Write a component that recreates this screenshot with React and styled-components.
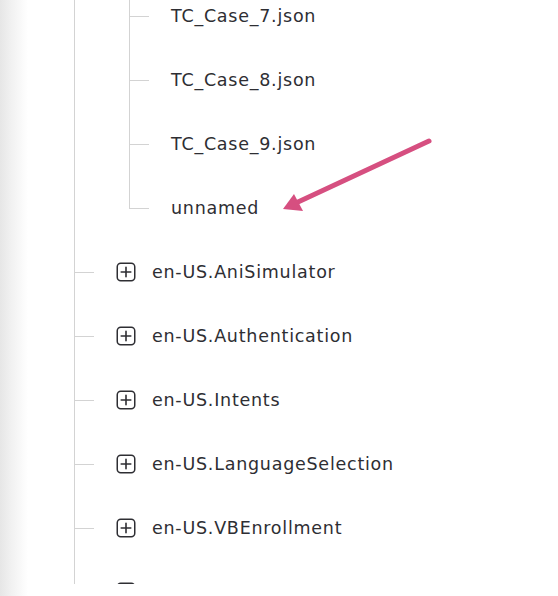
import React from "react";
import styled, { createGlobalStyle } from "styled-components";

const GlobalStyle = createGlobalStyle`
  html, body {
    margin: 0;
    padding: 0;
    background: #ffffff;
    overflow: hidden;
  }
`;

const Page = styled.div`
  position: relative;
  display: flex;
  width: 558px;
  height: 596px;
  overflow: hidden;
  background: #ffffff;
  font-family: "DejaVu Sans", "Liberation Sans", sans-serif;
  color: #2e2e33;
`;

const Shade = styled.div`
  flex: 0 0 28px;
  background: linear-gradient(to right, #e6e6e6 0%, #f1f1f1 40%, #ffffff 100%);
`;

const Viewport = styled.div`
  flex: 1;
  height: 584px;
  overflow: hidden;
`;

const Tree = styled.ul`
  list-style: none;
  margin: -16px 0 0 46px;
  padding: 0;
  display: flex;
  flex-direction: column;
`;

const Item = styled.li`
  display: flex;
  align-items: stretch;
  height: ${(p) => (p.$open ? "auto" : "64px")};
`;

const Rail = styled.div`
  flex: 0 0 ${(p) => p.$width}px;
  border-left: 1px solid #d3d3d3;
`;

const Branch = styled.div`
  flex: 0 0 20px;
  display: flex;
  flex-direction: column;
`;

const Elbow = styled.div`
  height: 33px;
  box-sizing: border-box;
  border-left: 1px solid #d3d3d3;
  border-bottom: 1px solid #d3d3d3;
`;

const Tail = styled.div`
  flex: 1;
  border-left: 1px solid ${(p) => (p.$last ? "transparent" : "#d3d3d3")};
`;

const SubList = styled.ul`
  list-style: none;
  margin: 0;
  padding: 0;
  display: flex;
  flex-direction: column;
`;

const Label = styled.span`
  display: flex;
  align-items: center;
  height: 64px;
  margin-left: ${(p) => p.$gap}px;
  font-size: 17.5px;
  letter-spacing: 0.75px;
  white-space: nowrap;
`;

const Toggle = styled.span`
  display: flex;
  align-items: center;
  height: 64px;
  margin-left: 22px;
`;

const Arrow = styled.svg`
  position: absolute;
  left: 0;
  top: 0;
  pointer-events: none;
`;

const PlusBox = () => (
  <svg width="20" height="20" viewBox="0 0 20 20">
    <rect x="1.25" y="1.25" width="17.5" height="17.5" rx="3.5" fill="none" stroke="#2e2e33" strokeWidth="1.5" />
    <path d="M10 5.2v9.6M5.2 10h9.6" stroke="#2e2e33" strokeWidth="1.6" strokeLinecap="round" />
  </svg>
);

const cases = ["TC_Case_7.json", "TC_Case_8.json", "TC_Case_9.json", "unnamed"];
const groups = [
  "en-US.AniSimulator",
  "en-US.Authentication",
  "en-US.Intents",
  "en-US.LanguageSelection",
  "en-US.VBEnrollment",
  "en-US.Welcome",
];

export default function App() {
  return (
    <>
      <GlobalStyle />
      <Page>
        <Shade />
        <Viewport>
          <Tree>
            <Item $open>
              <Rail $width={54} />
              <SubList>
                {cases.map((name, i) => (
                  <Item key={name}>
                    <Branch>
                      <Elbow />
                      <Tail $last={i === cases.length - 1} />
                    </Branch>
                    <Label $gap={22}>{name}</Label>
                  </Item>
                ))}
              </SubList>
            </Item>
            {groups.map((name) => (
              <Item key={name}>
                <Branch>
                  <Elbow />
                  <Tail />
                </Branch>
                <Toggle>
                  <PlusBox />
                </Toggle>
                <Label $gap={16}>{name}</Label>
              </Item>
            ))}
          </Tree>
        </Viewport>
        <Arrow width="558" height="596" viewBox="0 0 558 596">
          <line x1="429" y1="141" x2="298" y2="202" stroke="#d64f80" strokeWidth="5" strokeLinecap="round" />
          <polygon points="283,209 294,194 303,211" fill="#d64f80" />
        </Arrow>
      </Page>
    </>
  );
}
